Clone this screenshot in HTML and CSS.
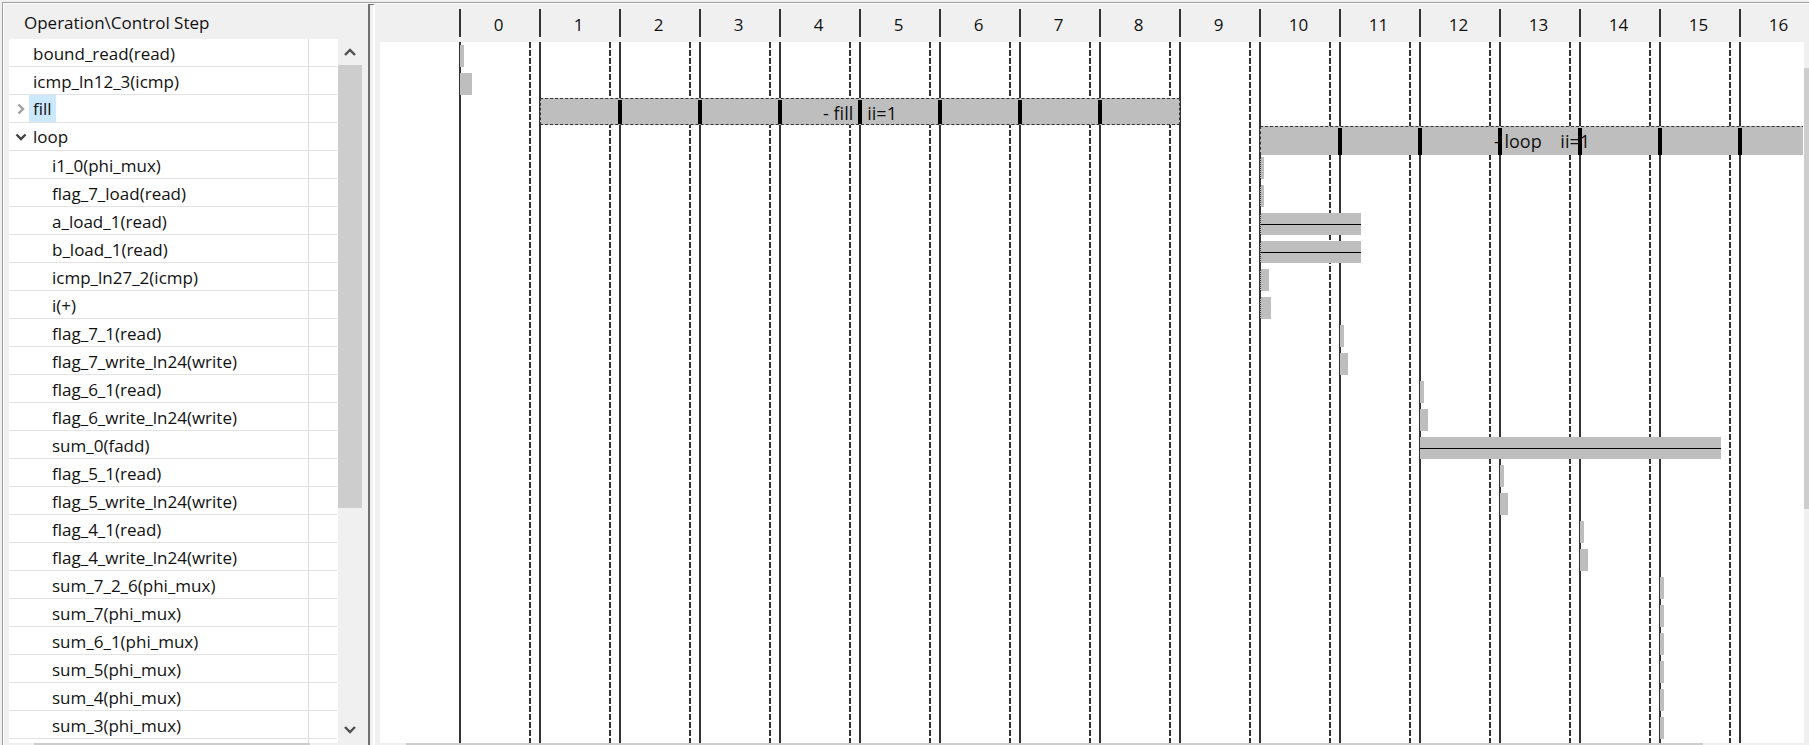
FILE: index.html
```html
<!DOCTYPE html>
<html lang="en">
<head>
<meta charset="utf-8">
<title>Schedule Viewer</title>
<link rel="stylesheet" href="styles.css">
</head>
<body>
<main class="viewer">
  <section class="ops" aria-label="Operations">
    <div class="ops-view">
      <table class="ops-table">
        <thead><tr><th colspan="2">Operation\Control Step</th></tr></thead>
        <tbody>
          <tr><td>bound_read(read)</td><td></td></tr>
          <tr><td>icmp_ln12_3(icmp)</td><td></td></tr>
          <tr class="group"><td><button class="toggle closed" aria-label="Expand fill"><svg viewBox="0 0 12 12"><path d="M3.5 1.5 8 6 3.5 10.5"/></svg></button><span class="selected">fill</span></td><td></td></tr>
          <tr class="group"><td><button class="toggle" aria-label="Collapse loop"><svg viewBox="0 0 12 12"><path d="M1.5 3.5 6 8 10.5 3.5"/></svg></button><span>loop</span></td><td></td></tr>
          <tr class="child"><td>i1_0(phi_mux)</td><td></td></tr>
          <tr class="child"><td>flag_7_load(read)</td><td></td></tr>
          <tr class="child"><td>a_load_1(read)</td><td></td></tr>
          <tr class="child"><td>b_load_1(read)</td><td></td></tr>
          <tr class="child"><td>icmp_ln27_2(icmp)</td><td></td></tr>
          <tr class="child"><td>i(+)</td><td></td></tr>
          <tr class="child"><td>flag_7_1(read)</td><td></td></tr>
          <tr class="child"><td>flag_7_write_ln24(write)</td><td></td></tr>
          <tr class="child"><td>flag_6_1(read)</td><td></td></tr>
          <tr class="child"><td>flag_6_write_ln24(write)</td><td></td></tr>
          <tr class="child"><td>sum_0(fadd)</td><td></td></tr>
          <tr class="child"><td>flag_5_1(read)</td><td></td></tr>
          <tr class="child"><td>flag_5_write_ln24(write)</td><td></td></tr>
          <tr class="child"><td>flag_4_1(read)</td><td></td></tr>
          <tr class="child"><td>flag_4_write_ln24(write)</td><td></td></tr>
          <tr class="child"><td>sum_7_2_6(phi_mux)</td><td></td></tr>
          <tr class="child"><td>sum_7(phi_mux)</td><td></td></tr>
          <tr class="child"><td>sum_6_1(phi_mux)</td><td></td></tr>
          <tr class="child"><td>sum_5(phi_mux)</td><td></td></tr>
          <tr class="child"><td>sum_4(phi_mux)</td><td></td></tr>
          <tr class="child"><td>sum_3(phi_mux)</td><td></td></tr>
          <tr class="child"><td></td><td></td></tr>
        </tbody>
      </table>
      <div class="hscroll"><div class="hthumb"></div></div>
    </div>
    <div class="vscroll">
      <button class="arrow" aria-label="Scroll up"><svg viewBox="0 0 12 12"><path d="M1 9 6 4 11 9"/></svg></button>
      <div class="vtrack"><div class="vthumb"></div></div>
      <button class="arrow" aria-label="Scroll down"><svg viewBox="0 0 12 12"><path d="M1 3 6 8 11 3"/></svg></button>
    </div>
  </section>
  <div class="splitter"></div>
  <section class="chart" aria-label="Schedule">
    <div class="steps">
      <span>0</span><span>1</span><span>2</span><span>3</span><span>4</span><span>5</span><span>6</span><span>7</span><span>8</span><span>9</span><span>10</span><span>11</span><span>12</span><span>13</span><span>14</span><span>15</span><span>16</span>
    </div>
    <div class="chart-body">
      <div class="canvas">
        <div class="lanes">
          <div class="lane"><div class="bar" style="grid-column-start:1;width:4px"></div></div>
          <div class="lane"><div class="bar" style="grid-column-start:1;width:12px"></div></div>
          <div class="lane"><div class="loop" style="grid-column:2 / span 8"><span class="loop-name">- fill&nbsp;&nbsp; ii=1</span></div></div>
          <div class="lane"><div class="loop open-end" style="grid-column:11 / span 7"><span class="loop-name">- loop&nbsp;&nbsp;&nbsp; ii=1</span></div></div>
          <div class="lane"><div class="bar first" style="grid-column-start:11;width:4px"></div></div>
          <div class="lane"><div class="bar first" style="grid-column-start:11;width:4px"></div></div>
          <div class="lane"><div class="bar first multi" style="grid-column-start:11;width:101px"></div></div>
          <div class="lane"><div class="bar first multi" style="grid-column-start:11;width:101px"></div></div>
          <div class="lane"><div class="bar first" style="grid-column-start:11;width:9px"></div></div>
          <div class="lane"><div class="bar first" style="grid-column-start:11;width:11px"></div></div>
          <div class="lane"><div class="bar" style="grid-column-start:12;width:4px"></div></div>
          <div class="lane"><div class="bar" style="grid-column-start:12;width:8px"></div></div>
          <div class="lane"><div class="bar" style="grid-column-start:13;width:4px"></div></div>
          <div class="lane"><div class="bar" style="grid-column-start:13;width:8px"></div></div>
          <div class="lane"><div class="bar multi" style="grid-column-start:13;width:301px"></div></div>
          <div class="lane"><div class="bar" style="grid-column-start:14;width:4px"></div></div>
          <div class="lane"><div class="bar" style="grid-column-start:14;width:8px"></div></div>
          <div class="lane"><div class="bar" style="grid-column-start:15;width:4px"></div></div>
          <div class="lane"><div class="bar" style="grid-column-start:15;width:8px"></div></div>
          <div class="lane"><div class="bar" style="grid-column-start:16;width:4px"></div></div>
          <div class="lane"><div class="bar" style="grid-column-start:16;width:4px"></div></div>
          <div class="lane"><div class="bar" style="grid-column-start:16;width:4px"></div></div>
          <div class="lane"><div class="bar" style="grid-column-start:16;width:4px"></div></div>
          <div class="lane"><div class="bar" style="grid-column-start:16;width:4px"></div></div>
          <div class="lane"><div class="bar" style="grid-column-start:16;width:4px"></div></div>
        </div>
      </div>
      <div class="vscroll edge"><div class="vtrack"><div class="vthumb"></div></div></div>
    </div>
    <div class="hscroll"><div class="hthumb"></div></div>
  </section>
</main>
</body>
</html>
```
FILE: styles.css
```css
* { box-sizing: border-box; }

:root {
  --face: #f0f0f0;
  --thumb: #cdcdcd;
  --bar: #bebebe;
  --line: #333;
  --row: 28px;
  --step: 80px;
}

body {
  margin: 0;
  height: 100vh;
  padding: 2px 0 0 2px;
  overflow: hidden;
  background: var(--face);
  color: #111;
  font: 17px/24px "Open Sans", "Noto Sans", sans-serif;
}

.viewer {
  display: flex;
  height: 100%;
  border-top: 1px solid #a0a0a0;
  border-left: 1px solid #a0a0a0;
  box-shadow: inset 1px 1px #fff;
}

button {
  display: flex;
  align-items: center;
  justify-content: center;
  padding: 0;
  border: 0;
  background: none;
}

svg {
  width: 12px;
  height: 12px;
  fill: none;
  stroke: #505050;
  stroke-width: 2.4;
}

/* Operation list */
.ops {
  display: flex;
  flex: none;
  width: 365px;
  padding-left: 6px;
}

.ops-view {
  display: flex;
  flex-direction: column;
  justify-content: space-between;
  width: 329px;
  overflow: hidden;
}

.ops-table {
  flex: 1;
  display: block;
  min-height: 0;
  overflow: hidden;
  border-spacing: 0;
}

.ops-table thead,
.ops-table tbody { display: block; }

.ops-table tr {
  display: grid;
  grid-template-columns: 299px 1fr;
  height: var(--row);
  background: #fff;
}

.ops-table thead tr {
  height: 36px;
  background: none;
}

.ops-table th {
  grid-column: span 2;
  padding: 8px 0 0 15px;
  font-weight: normal;
  text-align: left;
}

.ops-table td {
  display: flex;
  align-items: center;
  padding: 2px 0 0 24px;
  border-bottom: 1px solid #e2e2e2;
}

.ops-table td + td {
  padding: 0;
  border-left: 1px solid #dcdcdc;
  margin-right: 1px;
}

.ops-table .child td:first-child { padding-left: 43px; }
.ops-table .group td:first-child { padding: 0 0 0 4px; }

.toggle {
  width: 16px;
  height: 24px;
}

.toggle svg { stroke: #404040; }
.toggle.closed svg { stroke: #a0a0a0; }

.group span {
  padding: 2px 4px 1px;
}

.selected { background: #cce8ff; }

/* Scroll bars */
.vscroll {
  display: flex;
  flex-direction: column;
  width: 24px;
  padding: 36px 0 2px;
}

.arrow {
  width: 24px;
  height: 26px;
  flex: none;
}

.vtrack { flex: 1; }

.vthumb {
  height: 68%;
  background: var(--thumb);
}

.hscroll {
  flex: none;
  height: 2px;
  background: var(--face);
}

.hthumb {
  height: 2px;
  background: var(--thumb);
}

.ops .hthumb {
  width: 276px;
  margin-left: 25px;
}

.splitter {
  flex: none;
  width: 7px;
  margin-top: 1px;
  border-left: 2px solid #707070;
  border-top: 1px solid #707070;
  border-right: 2px solid #fff;
}

/* Schedule chart */
.chart {
  flex: 1;
  display: flex;
  flex-direction: column;
  min-width: 0;
  padding-left: 5px;
}

.steps {
  display: flex;
  flex: none;
  height: 39px;
  padding: 6px 0 5px 79px;
  overflow: hidden;
}

.steps span {
  flex: none;
  width: var(--step);
  padding-right: 3px;
  border-left: 2px solid var(--line);
  text-align: center;
  line-height: 32px;
}

.chart-body {
  flex: 1;
  display: flex;
  min-height: 0;
}

.canvas {
  flex: 1;
  min-width: 0;
  padding: 0 1px 0 79px;
  background: #fff;
}

.lanes {
  height: 100%;
  padding-left: 1px;
  overflow: hidden;
  background:
    repeating-linear-gradient(90deg, var(--line) 0 2px, transparent 2px var(--step)),
    repeating-linear-gradient(transparent 0 6px, #fff 6px 8px),
    repeating-linear-gradient(90deg, transparent 0 70px, var(--line) 70px 72px, transparent 72px var(--step));
}

.lane {
  display: grid;
  grid-template-columns: repeat(18, var(--step));
  height: var(--row);
}

.bar {
  height: 22px;
  margin-top: 3px;
  background: var(--bar);
}

.bar.first { border-left: 1px dotted var(--line); }

.bar.multi {
  background: linear-gradient(#000, #000) 0 11px / 100% 1px no-repeat, var(--bar);
}

.loop {
  display: flex;
  justify-content: center;
  height: 27px;
  border: 1px dashed var(--line);
  background: var(--bar);
  position: relative;
}

.loop::before {
  content: "";
  position: absolute;
  inset: 1px 4px 0 77px;
  background: repeating-linear-gradient(90deg, #000 0 4px, transparent 4px var(--step));
}

/* The loop runs on past the right edge of the view */
.loop.open-end {
  height: 29px;
  margin-right: -80px;
  padding-right: 76px;
  border-bottom: 0;
}

.loop-name {
  position: relative;
  font-size: 18px;
  line-height: 28px;
}

/* Clipped scroll bar at the window edge */
.vscroll.edge {
  width: 5px;
  padding: 26px 0;
  background: var(--face);
}

.edge .vthumb { height: 68%; }

.chart > .hscroll { padding: 0 106px 0 26px; }
```
